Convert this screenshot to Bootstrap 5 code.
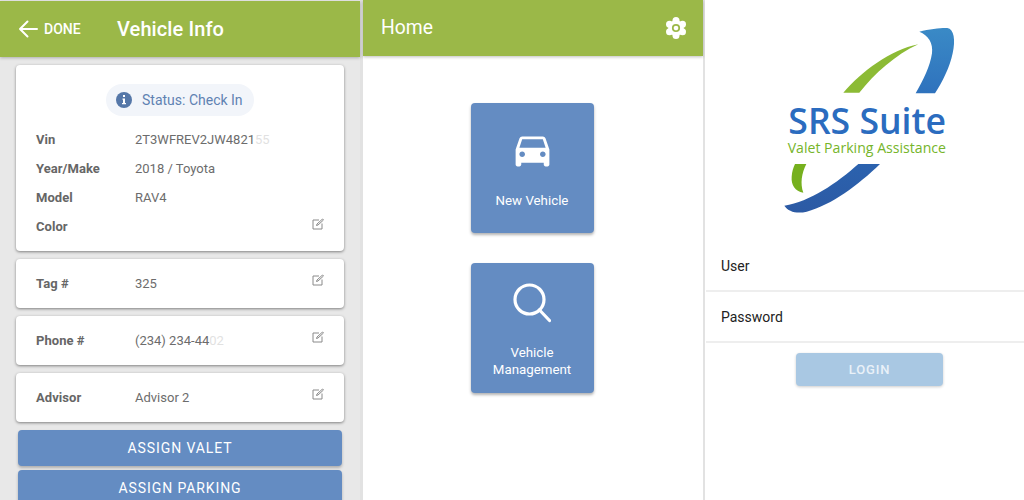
<!DOCTYPE html>
<html lang="en">
<head>
<meta charset="utf-8">
<title>SRS Suite</title>
<link rel="stylesheet" href="https://cdn.jsdelivr.net/npm/bootstrap@5.3.0/dist/css/bootstrap.min.css">
<style>
html,body{height:500px;overflow:hidden}
body{font-family:Roboto,"Liberation Sans",sans-serif;background:#e2e2e2;color:#666}
.stage{height:500px;width:1024px;overflow:hidden}
.pane-info{width:360px;background:#e8e8e8;padding-top:1px}
.pane-home{width:340px;margin-left:3px;background:#fff}
.pane-login{width:319px;margin-left:2px;background:#fff}
.app-head{background:#9bb848;color:#fff;height:56px;box-shadow:0 1px 3px rgba(0,0,0,.25);flex:none}
.done-link{font-size:14px;font-weight:500;width:117px;padding-left:18px;gap:6px}
.head-title{font-size:20px;font-weight:500;line-height:1;letter-spacing:.1px}
.home-title{font-size:19.300px;padding-left:18px;line-height:1}
.gear{margin-right:16px}
.info-stack{padding:8px 16px 0;gap:8px}
.info-card{border:0;border-radius:4px;box-shadow:0 1px 3px rgba(0,0,0,.45);padding-left:20px;padding-right:20px;font-size:13px;position:relative;flex:none}
.card-main{height:186px;padding-top:19px}
.card-small{height:49px;justify-content:center}
.status-pill{height:32px;width:148px;background:#f2f5fa;border-radius:16px;color:#5f82b2;font-size:14px;gap:10px;padding-left:10px;margin:0 auto 9px}
.info-row{height:29px;align-items:center}
.info-label{width:99px;font-weight:700;color:#666;letter-spacing:.05px}
.info-val{color:#6c6c6c}
.fade-end{opacity:.2}
.edit-mark{position:absolute;right:20px;top:50%;margin-top:-10px;display:block}
.card-main .edit-mark{top:153px;margin-top:0}
.act-btn{background:#648cc2;color:#fff;border:0;border-radius:4px;height:36px;width:324px;margin-left:2px;font-size:14px;font-weight:400;letter-spacing:.9px;line-height:36px;padding:0;flex:none;box-shadow:0 2px 3px rgba(0,0,0,.25);text-transform:uppercase}
.act-btn:hover{background:#648cc2;color:#fff}
.btn-stack{gap:4px}
.tile-wrap{padding:47px 2px 0 0;gap:30px}
.tile{width:123px;height:130px;background:#648cc2;color:#fff;border-radius:4px;box-shadow:0 2px 3px rgba(0,0,0,.3);font-size:13.300px;line-height:17px;text-align:center}
.tile-ico{height:69px}
.tile-label{height:57px}
.lens{margin-bottom:9px}
.logo-box{height:241px;padding:15px 0 0 55px}
.field-row{height:51px;border-bottom:2px solid #eee;padding:2px 15px 0;font-size:14px;color:#222;margin-left:1px;align-items:center}
.login-btn{width:147px;height:33px;background:#a9c8e3;color:#e9f1f8;border:0;border-radius:4px;font-size:13px;font-weight:500;letter-spacing:.8px;padding:0;box-shadow:0 1px 3px rgba(0,0,0,.2);margin:10px 0 0 91px}
.login-btn:hover{background:#a9c8e3;color:#e9f1f8}
</style>
</head>
<body>
<div class="stage d-flex">
  <section class="pane-info d-flex flex-column">
    <header class="app-head d-flex align-items-center">
      <div class="done-link d-flex align-items-center">
        <svg width="20" height="20" viewBox="0 0 20 20" fill="none" stroke="#fff" stroke-width="2" stroke-linecap="round" stroke-linejoin="round"><path d="M19 10H2M9.500 2.500 2 10l7.500 7.500"/></svg>
        <span>DONE</span>
      </div>
      <div class="head-title">Vehicle Info</div>
    </header>
    <div class="info-stack d-flex flex-column">
      <div class="card info-card card-main">
        <div class="status-pill d-flex align-items-center">
          <svg width="16" height="16" viewBox="0 0 16 16"><circle cx="8" cy="8" r="8" fill="#5577a8"/><rect x="7" y="3" width="2" height="2" fill="#fff"/><path d="M6.500 6.500H9V11h1v1.300H6V11h1V7.800h-.5z" fill="#fff"/></svg>
          <span>Status: Check In</span>
        </div>
        <div class="d-flex info-row"><div class="info-label">Vin</div><div class="info-val">2T3WFREV2JW4821<span class="fade-end">55</span></div></div>
        <div class="d-flex info-row"><div class="info-label">Year/Make</div><div class="info-val">2018 / Toyota</div></div>
        <div class="d-flex info-row"><div class="info-label">Model</div><div class="info-val">RAV4</div></div>
        <div class="d-flex info-row"><div class="info-label">Color</div><div class="info-val"></div></div>
        <svg class="edit-mark" width="12" height="12" viewBox="0 0 12 12" fill="none" stroke="#8a8a8a"><path d="M7 2H1v9h9V5.500"/><path d="M4.500 7.500 5 6l5.500-5L11.500 2 6 7z"/></svg>
      </div>
      <div class="card info-card card-small">
        <div class="d-flex info-row"><div class="info-label">Tag #</div><div class="info-val">325</div></div>
        <svg class="edit-mark" width="12" height="12" viewBox="0 0 12 12" fill="none" stroke="#8a8a8a"><path d="M7 2H1v9h9V5.500"/><path d="M4.500 7.500 5 6l5.500-5L11.500 2 6 7z"/></svg>
      </div>
      <div class="card info-card card-small">
        <div class="d-flex info-row"><div class="info-label">Phone #</div><div class="info-val">(234) 234-44<span class="fade-end">02</span></div></div>
        <svg class="edit-mark" width="12" height="12" viewBox="0 0 12 12" fill="none" stroke="#8a8a8a"><path d="M7 2H1v9h9V5.500"/><path d="M4.500 7.500 5 6l5.500-5L11.500 2 6 7z"/></svg>
      </div>
      <div class="card info-card card-small">
        <div class="d-flex info-row"><div class="info-label">Advisor</div><div class="info-val">Advisor 2</div></div>
        <svg class="edit-mark" width="12" height="12" viewBox="0 0 12 12" fill="none" stroke="#8a8a8a"><path d="M7 2H1v9h9V5.500"/><path d="M4.500 7.500 5 6l5.500-5L11.500 2 6 7z"/></svg>
      </div>
      <div class="d-flex flex-column btn-stack">
        <button class="btn act-btn">Assign Valet</button>
        <button class="btn act-btn">Assign Parking</button>
      </div>
    </div>
  </section>

  <section class="pane-home d-flex flex-column">
    <header class="app-head d-flex align-items-center justify-content-between">
      <div class="home-title">Home</div>
      <svg class="gear" width="22" height="22" viewBox="-11 -11 22 22"><g fill="#fff"><circle r="7.800"/><circle cy="-7.500" r="3.500"/><circle cy="7.500" r="3.500"/><circle cx="6.500" cy="-3.750" r="3.500"/><circle cx="-6.500" cy="-3.750" r="3.500"/><circle cx="6.500" cy="3.750" r="3.500"/><circle cx="-6.500" cy="3.750" r="3.500"/></g><circle r="3.200" fill="none" stroke="#9bb848" stroke-width="1.800"/></svg>
    </header>
    <div class="tile-wrap d-flex flex-column align-items-center">
      <div class="tile">
        <div class="tile-ico d-flex align-items-end justify-content-center">
          <svg width="45" height="45" viewBox="0 0 24 24" fill="#fff"><path d="M18.920 6.010C18.720 5.420 18.160 5 17.500 5h-11c-.66 0-1.210.42-1.420 1.010L3 12v8c0 .55.45 1 1 1h1c.55 0 1-.45 1-1v-1h12v1c0 .55.45 1 1 1h1c.55 0 1-.45 1-1v-8l-2.080-5.990zM6.500 16c-.83 0-1.500-.67-1.500-1.500S5.670 13 6.500 13s1.500.67 1.500 1.500S7.330 16 6.500 16zm11 0c-.83 0-1.500-.67-1.500-1.500s.67-1.500 1.500-1.500 1.500.67 1.500 1.500-.67 1.500-1.500 1.500zM5 11l1.500-4.500h11L19 11H5z"/></svg>
        </div>
        <div class="tile-label d-flex align-items-center justify-content-center"><div>New Vehicle</div></div>
      </div>
      <div class="tile">
        <div class="tile-ico d-flex align-items-end justify-content-center">
          <svg class="lens" width="38" height="40" viewBox="0 0 38 40" fill="none" stroke="#fff" stroke-width="3.200" stroke-linecap="round"><circle cx="16.500" cy="16.500" r="14.500"/><path d="M26.500 27 36.500 37.500"/></svg>
        </div>
        <div class="tile-label d-flex align-items-center justify-content-center"><div>Vehicle<br>Management</div></div>
      </div>
    </div>
  </section>

  <section class="pane-login d-flex flex-column">
    <div class="logo-box">
      <svg width="210" height="210" viewBox="0 0 630 630">
        <defs>
          <linearGradient id="blueTop" x1="0" y1="0" x2="0" y2="1"><stop offset="0" stop-color="#3a8ac6"/><stop offset="1" stop-color="#2f72bd"/></linearGradient>
          <linearGradient id="blueLow" x1="0" y1="0" x2="0" y2="1"><stop offset="0" stop-color="#2b62ae"/><stop offset="1" stop-color="#2c5aa4"/></linearGradient>
        </defs>
        <path d="M478 50C510 42 545 38 562 39 582 42 587 75 578 115 570 155 548 200 525 235H467C490 195 510 155 516 115 520 85 505 60 478 50Z" fill="url(#blueTop)"/>
        <path d="M250 233C305 170 390 105 475 88 405 120 345 175 298 233Z" fill="#8cbb35"/>
        <path d="M105 447H139C125 475 120 505 130 533 105 528 93 510 95 485 96 470 100 458 105 447Z" fill="#76b01e"/>
        <path d="M73 572C150 560 230 505 295 447H360C295 510 215 570 140 590 110 597 85 590 73 572Z" fill="url(#blueLow)"/>
        <text x="85" y="358" font-family="'Open Sans','Noto Sans',sans-serif" font-weight="600" font-size="108" fill="#2b6cbf" textLength="473" lengthAdjust="spacingAndGlyphs">SRS Suite</text>
        <text x="83" y="413" font-family="'Open Sans','Noto Sans',sans-serif" font-weight="500" font-size="43" fill="#76b52a" textLength="475" lengthAdjust="spacingAndGlyphs">Valet Parking Assistance</text>
      </svg>
    </div>
    <div class="d-flex field-row">User</div>
    <div class="d-flex field-row">Password</div>
    <button class="btn login-btn">LOGIN</button>
  </section>
</div>
</body>
</html>
